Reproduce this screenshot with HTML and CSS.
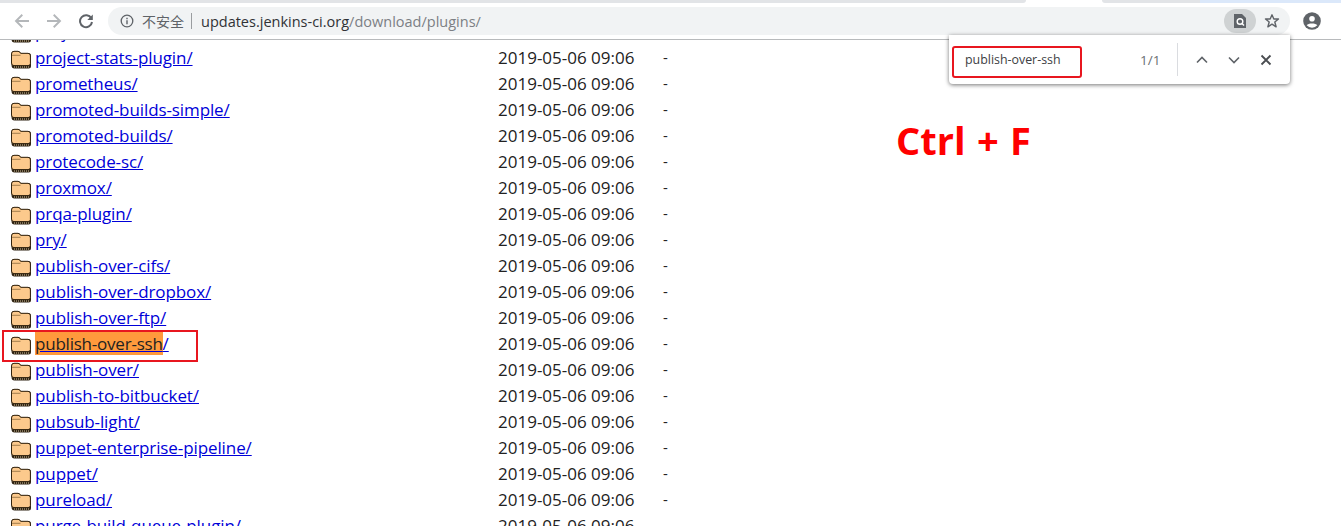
FILE: index.html
```html
<!DOCTYPE html>
<html lang="zh">
<head>
<meta charset="utf-8">
<title>Index of /download/plugins</title>
<link rel="stylesheet" href="styles.css">
</head>
<body>
<svg class="defs" width="0" height="0" aria-hidden="true">
  <symbol id="folder" viewBox="0 0 22 20">
    <path d="M1.500 16V5Q1.500 2 4 2H8Q9.800 2 10.800 4H18Q21 4 21 7V17Q21 19.500 18.500 19.500H4.500Q1.500 19.500 1.500 16Z" fill="#2e2212"/>
    <path d="M1.500 14V5Q1.500 2.300 4 2.300H8Q9.600 2.300 10.600 4.300H18Q20.400 4.300 20.400 6.800V14.500Q20.400 16.600 18 16.600H4Q1.500 16.600 1.500 14Z" fill="#fcc98c" stroke="#33240f" stroke-width="1"/>
    <path d="M2 6.300H10.500" stroke="#8a6a3c" stroke-width=".8" fill="none"/>
    <path d="M4 18H19" stroke="#d8c6a0" stroke-width="1" stroke-dasharray="1 1"/>
  </symbol>
</svg>
<header class="chrome">
  <div class="tabstrip">
    <span class="tab tab-a"></span>
    <span class="tab tab-active"></span>
    <span class="tab tab-b"></span>
    <span class="tab tab-c"></span>
  </div>
  <div class="toolbar">
    <svg class="nav" viewBox="0 0 16 16" width="16" height="16"><path d="M15 8H2M8.300 1.800 2 8 8.300 14.200" fill="none" stroke="#b4b7ba" stroke-width="1.900"/></svg>
    <svg class="nav nav-fwd" viewBox="0 0 16 16" width="16" height="16"><path d="M1 8H14M7.700 1.800 14 8 7.700 14.200" fill="none" stroke="#b4b7ba" stroke-width="1.900"/></svg>
    <svg class="nav nav-reload" viewBox="0 0 16 16" width="16" height="16"><path d="M13.300 5.300A6 6 0 1 0 14 9" fill="none" stroke="#5f6368" stroke-width="2"/><path d="M14.800 1.500V7H9.300Z" fill="#5f6368"/></svg>
    <div class="omnibox">
      <svg class="info" viewBox="0 0 14 14" width="14" height="14"><circle cx="7" cy="7" r="5.800" fill="none" stroke="#5f6368" stroke-width="1.300"/><path d="M7 6.200V10.300M7 3.700V5.200" stroke="#5f6368" stroke-width="1.400"/></svg>
      <span class="insecure">不安全</span>
      <span class="sep"></span>
      <span class="url">updates.jenkins-ci.org<span class="url-path">/download/plugins/</span></span>
      <span class="omni-end">
        <span class="zoom-chip"><svg viewBox="0 0 14 16" width="14" height="16"><path d="M1 1H9L13 5V15H1Z" fill="#5f6368"/><circle cx="7" cy="8.500" r="2.800" fill="none" stroke="#fff" stroke-width="1.400"/><path d="M9 10.500 11 12.500" stroke="#fff" stroke-width="1.400"/></svg></span>
        <svg class="star" viewBox="0 0 16 16" width="16" height="16"><path d="M8 1.800 9.800 6H14.500L10.800 9 12.100 13.800 8 11.100 3.900 13.800 5.200 9 1.500 6H6.200Z" fill="none" stroke="#5f6368" stroke-width="1.400" stroke-linejoin="round"/></svg>
      </span>
    </div>
    <svg class="account" viewBox="0 0 18 18" width="18" height="18"><circle cx="9" cy="9" r="8.800" fill="#5f6368"/><circle cx="9" cy="6.800" r="2.800" fill="#fff"/><path d="M3.700 13.300C5 10.800 13 10.800 14.300 13.300A7 7 0 0 1 3.700 13.300Z" fill="#fff"/></svg>
  </div>
</header>
<main class="page">
  <table class="listing">
    <tbody>
      <tr class="row"><td class="c-icon"><svg class="folder" width="22" height="20"><use href="#folder"/></svg></td><td class="c-name"><a href="#">project-inheritance/</a></td><td class="c-date">2019-05-06 09:06</td><td class="c-size">-</td></tr>
      <tr class="row"><td class="c-icon"><svg class="folder" width="22" height="20"><use href="#folder"/></svg></td><td class="c-name"><a href="#">project-stats-plugin/</a></td><td class="c-date">2019-05-06 09:06</td><td class="c-size">-</td></tr>
      <tr class="row"><td class="c-icon"><svg class="folder" width="22" height="20"><use href="#folder"/></svg></td><td class="c-name"><a href="#">prometheus/</a></td><td class="c-date">2019-05-06 09:06</td><td class="c-size">-</td></tr>
      <tr class="row"><td class="c-icon"><svg class="folder" width="22" height="20"><use href="#folder"/></svg></td><td class="c-name"><a href="#">promoted-builds-simple/</a></td><td class="c-date">2019-05-06 09:06</td><td class="c-size">-</td></tr>
      <tr class="row"><td class="c-icon"><svg class="folder" width="22" height="20"><use href="#folder"/></svg></td><td class="c-name"><a href="#">promoted-builds/</a></td><td class="c-date">2019-05-06 09:06</td><td class="c-size">-</td></tr>
      <tr class="row"><td class="c-icon"><svg class="folder" width="22" height="20"><use href="#folder"/></svg></td><td class="c-name"><a href="#">protecode-sc/</a></td><td class="c-date">2019-05-06 09:06</td><td class="c-size">-</td></tr>
      <tr class="row"><td class="c-icon"><svg class="folder" width="22" height="20"><use href="#folder"/></svg></td><td class="c-name"><a href="#">proxmox/</a></td><td class="c-date">2019-05-06 09:06</td><td class="c-size">-</td></tr>
      <tr class="row"><td class="c-icon"><svg class="folder" width="22" height="20"><use href="#folder"/></svg></td><td class="c-name"><a href="#">prqa-plugin/</a></td><td class="c-date">2019-05-06 09:06</td><td class="c-size">-</td></tr>
      <tr class="row"><td class="c-icon"><svg class="folder" width="22" height="20"><use href="#folder"/></svg></td><td class="c-name"><a href="#">pry/</a></td><td class="c-date">2019-05-06 09:06</td><td class="c-size">-</td></tr>
      <tr class="row"><td class="c-icon"><svg class="folder" width="22" height="20"><use href="#folder"/></svg></td><td class="c-name"><a href="#">publish-over-cifs/</a></td><td class="c-date">2019-05-06 09:06</td><td class="c-size">-</td></tr>
      <tr class="row"><td class="c-icon"><svg class="folder" width="22" height="20"><use href="#folder"/></svg></td><td class="c-name"><a href="#">publish-over-dropbox/</a></td><td class="c-date">2019-05-06 09:06</td><td class="c-size">-</td></tr>
      <tr class="row"><td class="c-icon"><svg class="folder" width="22" height="20"><use href="#folder"/></svg></td><td class="c-name"><a href="#">publish-over-ftp/</a></td><td class="c-date">2019-05-06 09:06</td><td class="c-size">-</td></tr>
      <tr class="row"><td class="c-icon"><svg class="folder" width="22" height="20"><use href="#folder"/></svg></td><td class="c-name"><a href="#"><mark class="hit">publish-over-ssh</mark>/</a></td><td class="c-date">2019-05-06 09:06</td><td class="c-size">-</td></tr>
      <tr class="row"><td class="c-icon"><svg class="folder" width="22" height="20"><use href="#folder"/></svg></td><td class="c-name"><a href="#">publish-over/</a></td><td class="c-date">2019-05-06 09:06</td><td class="c-size">-</td></tr>
      <tr class="row"><td class="c-icon"><svg class="folder" width="22" height="20"><use href="#folder"/></svg></td><td class="c-name"><a href="#">publish-to-bitbucket/</a></td><td class="c-date">2019-05-06 09:06</td><td class="c-size">-</td></tr>
      <tr class="row"><td class="c-icon"><svg class="folder" width="22" height="20"><use href="#folder"/></svg></td><td class="c-name"><a href="#">pubsub-light/</a></td><td class="c-date">2019-05-06 09:06</td><td class="c-size">-</td></tr>
      <tr class="row"><td class="c-icon"><svg class="folder" width="22" height="20"><use href="#folder"/></svg></td><td class="c-name"><a href="#">puppet-enterprise-pipeline/</a></td><td class="c-date">2019-05-06 09:06</td><td class="c-size">-</td></tr>
      <tr class="row"><td class="c-icon"><svg class="folder" width="22" height="20"><use href="#folder"/></svg></td><td class="c-name"><a href="#">puppet/</a></td><td class="c-date">2019-05-06 09:06</td><td class="c-size">-</td></tr>
      <tr class="row"><td class="c-icon"><svg class="folder" width="22" height="20"><use href="#folder"/></svg></td><td class="c-name"><a href="#">pureload/</a></td><td class="c-date">2019-05-06 09:06</td><td class="c-size">-</td></tr>
      <tr class="row"><td class="c-icon"><svg class="folder" width="22" height="20"><use href="#folder"/></svg></td><td class="c-name"><a href="#">purge-build-queue-plugin/</a></td><td class="c-date">2019-05-06 09:06</td><td class="c-size">-</td></tr>
    </tbody>
  </table>
</main>
<div class="find-bar">
  <span class="find-query">publish-over-ssh</span>
  <span class="find-count">1/1</span>
  <span class="find-sep"></span>
  <svg class="find-btn" viewBox="0 0 12 8" width="12" height="8"><path d="M1 6.500 6 1.500 11 6.500" fill="none" stroke="#5f6368" stroke-width="1.600"/></svg>
  <svg class="find-btn" viewBox="0 0 12 8" width="12" height="8"><path d="M1 1.500 6 6.500 11 1.500" fill="none" stroke="#5f6368" stroke-width="1.600"/></svg>
  <svg class="find-btn" viewBox="0 0 12 12" width="12" height="12"><path d="M1.500 1.500 10.500 10.500M10.500 1.500 1.500 10.500" fill="none" stroke="#4a4d51" stroke-width="1.800"/></svg>
</div>
<div class="note">Ctrl + F</div>
<div class="callout"></div>
</body>
</html>
```
FILE: styles.css
```css
* { box-sizing: border-box; }
html, body { margin: 0; height: 526px; overflow: hidden; background: #fff; }
body { font-family: "Liberation Sans", Arial, sans-serif; position: relative; }
.defs { position: absolute; }

.chrome { height: 40px; border-bottom: 1px solid #b8babc; background: #fff; position: relative; z-index: 2; }
.tabstrip { height: 3px; display: flex; }
.tab { display: block; height: 3px; }
.tab-a { width: 1026px; background: #e2e4e7; border-bottom-right-radius: 3px; }
.tab-active { width: 76px; background: #fff; }
.tab-b { width: 98px; background: #e2e4e7; border-bottom-left-radius: 3px; }
.tab-c { flex: 1; background: #dbe8fa; }
.toolbar { height: 36px; display: flex; align-items: center; padding-left: 14px; }
.nav { flex: none; }
.nav-fwd { margin-left: 16px; }
.nav-reload { margin-left: 16px; }
.omnibox { flex: none; margin-left: 14px; width: 1182px; height: 28px; border-radius: 14px; background: #f1f3f4; display: flex; align-items: center; padding-left: 12px; }
.info { flex: none; }
.insecure { font: 14px "Noto Sans CJK SC", sans-serif; color: #5f6368; margin-left: 8px; }
.sep { width: 1px; height: 16px; background: #9a9da0; margin: 0 9px 0 7px; }
.url { font: 14.500px "Open Sans", "Liberation Sans", sans-serif; color: #303236; white-space: nowrap; }
.url-path { color: #7c7f84; }
.omni-end { margin-left: auto; display: flex; align-items: center; }
.zoom-chip { width: 32px; height: 24px; border-radius: 12px; background: #cfd2d3; display: flex; align-items: center; justify-content: center; }
.star { margin: 0 10px 0 8px; }
.account { flex: none; margin-left: 13px; }

.page { padding-left: 8px; margin-top: -22px; }
.listing { border-collapse: collapse; }
.row { height: 26px; }
.row td { padding: 0; }
.c-icon { width: 27px; vertical-align: middle; }
.folder { display: block; margin-left: 2px; margin-top: 3px; }
.c-name { width: 463px; font: 17px "Open Sans", "Liberation Sans", sans-serif; letter-spacing: -.1px; }
.c-name a { color: #0000d8; text-decoration: underline; }
.c-date { width: 165px; font: 17px "Open Sans", "Liberation Sans", sans-serif; color: #222; }
.c-size { font: 15px "Open Sans", "Liberation Sans", sans-serif; color: #222; }
.hit { background: #ff9a3c; color: #222; letter-spacing: -.22px; }

.find-bar { position: absolute; left: 949px; top: 35px; width: 341px; height: 49px; z-index: 3; background: #fff; border-radius: 0 0 4px 4px; box-shadow: 0 1px 4px rgba(0,0,0,.55); display: flex; align-items: center; }
.find-query { flex: none; margin: 5px 60px 0 5px; width: 126px; height: 28px; padding-left: 11px; outline: 2px solid #e8161f; border-radius: 1px; font: 12.400px/24px "Open Sans", sans-serif; color: #3c4043; }
.find-count { flex: none; font: 13.500px "Open Sans", sans-serif; color: #6b7073; width: 37px; }
.find-sep { flex: none; width: 1px; height: 33px; background: #dadce0; margin-right: 18px; }
.find-btn { flex: none; margin-right: 20px; }
.find-btn:last-child { margin-right: 0; }
.note { position: absolute; left: 896px; top: 114px; z-index: 1; font: bold 38px "Open Sans", "Liberation Sans", sans-serif; word-spacing: 1.500px; color: #f00; }
.callout { position: absolute; left: 2px; top: 330px; width: 196px; height: 32px; border: 2px solid #e8161f; z-index: 1; }
```
